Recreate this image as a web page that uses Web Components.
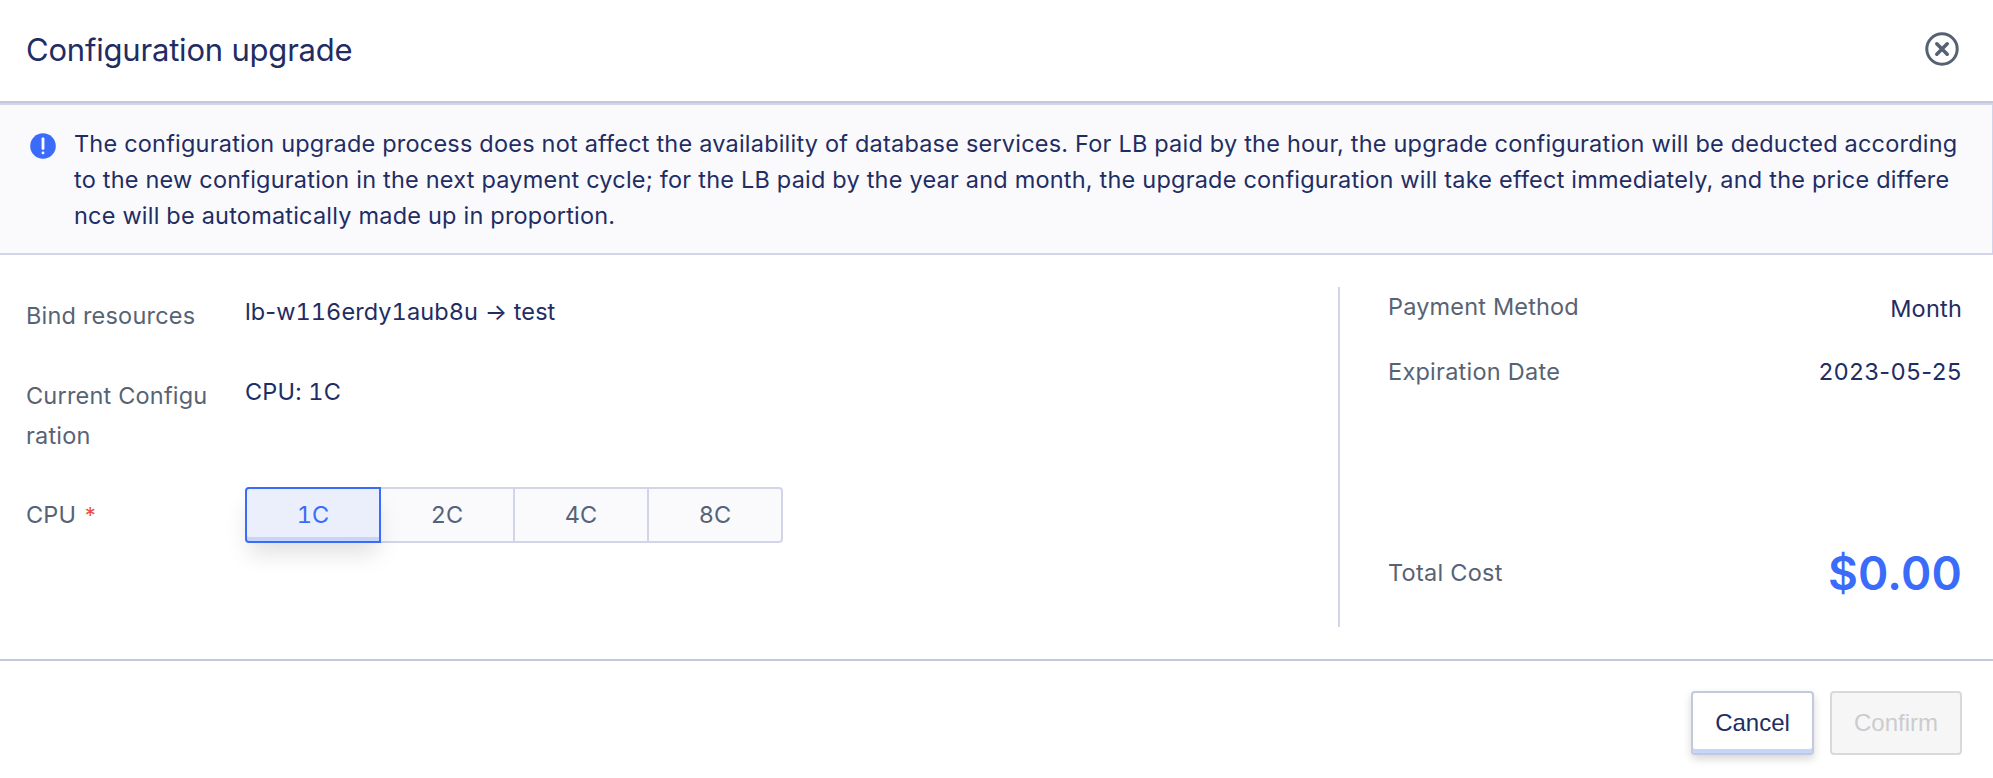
<!DOCTYPE html>
<html lang="en">
<head>
<meta charset="utf-8">
<title>Configuration upgrade</title>
<style>
html, body { margin: 0; height: 100%; overflow: hidden; background: #fff; }
body {
  --ink: #1f2d63; --muted: #576375; --blue: #3b6bf9; --line: #d2d5ea; --edge: #c3c9dc; --tint: #fafafd; --ledge: #c6d5f8;
  font: 400 23.5px/36px Inter, "Liberation Sans", sans-serif; letter-spacing: .204px; color: var(--ink);
}
.num { font-variant-numeric: tabular-nums; }
.resource { letter-spacing: .08px; }
</style>
</head>
<body>
<upgrade-dialog>
  <dialog-header slot="header">Configuration upgrade</dialog-header>
  <notice-bar slot="notice">The configuration upgrade process does not affect the availability of database services. For LB paid by the hour, the upgrade configuration will be deducted according to the new configuration in the next payment cycle; for the LB paid by the year and month, the upgrade configuration will take effect immediately, and the price difference will be automatically made up in proportion.</notice-bar>
  <form-row slot="form" class="resource" label="Bind resources">lb-<span class="num">w116erdy1aub8u</span> → test</form-row>
  <form-row slot="form" label="Current Configuration"><span class="num">CPU: 1C</span></form-row>
  <form-row slot="form" label="CPU" required>
    <segmented-control><segment-item selected>1C</segment-item><segment-item>2C</segment-item><segment-item>4C</segment-item><segment-item>8C</segment-item></segmented-control>
  </form-row>
  <cost-summary slot="summary">
    <summary-row label="Payment Method" class="method">Month</summary-row>
    <summary-row label="Expiration Date" class="date">2023-05-25</summary-row>
    <summary-row label="Total Cost" total>$0.00</summary-row>
  </cost-summary>
  <action-button slot="footer">Cancel</action-button>
  <action-button slot="footer" disabled>Confirm</action-button>
</upgrade-dialog>
<script>
const define = (name, html, setup) => {
  const template = document.createElement('template');
  template.innerHTML = html;
  customElements.define(name, class extends HTMLElement {
    constructor() {
      super();
      this.attachShadow({ mode: 'open' }).append(template.content.cloneNode(true));
    }
    connectedCallback() { if (setup) setup(this, this.shadowRoot); }
  });
};
const setLabel = (host, root) => { root.querySelector('.label').textContent = host.getAttribute('label'); };

define('upgrade-dialog', `
<style>
:host { display: flex; flex-direction: column; height: 100vh; min-height: 778px; box-sizing: border-box; }
.body { display: flex; height: 340px; padding: 32px 31px 32px 26px; border-bottom: 2px solid var(--edge); }
.form { flex: 1; display: flex; flex-direction: column; gap: 40px; padding-top: 8px; }
footer { display: flex; justify-content: flex-end; gap: 16px; padding: 30px 31px 0; }
</style>
<slot name="header"></slot>
<slot name="notice"></slot>
<div class="body"><div class="form"><slot name="form"></slot></div><slot name="summary"></slot></div>
<footer><slot name="footer"></slot></footer>`);

define('dialog-header', `
<style>
:host { display: flex; align-items: center; justify-content: space-between; box-sizing: border-box; height: 103px; padding: 0 34px 2px 26px; border-bottom: 2px solid var(--edge); font-size: 31px; letter-spacing: -.2px; }
svg { display: block; margin-top: -1px; }
</style>
<span><slot></slot></span>
<svg width="34" height="34" viewBox="0 0 34 34" fill="none" stroke="#566273"><circle cx="17" cy="17" r="15.2" stroke-width="3"/><path d="M11.8 11.8 22.2 22.2M22.2 11.8 11.8 22.2" stroke-width="3.6" stroke-linecap="round"/></svg>`);

define('notice-bar', `
<style>
:host { display: flex; box-sizing: border-box; height: 152px; padding: 21px 32px 0 30px; border: solid var(--line); border-width: 2px 1px 2px 0; background: var(--tint); word-break: break-all; }
svg { flex: none; margin: 7px 18px 0 0; }
</style>
<svg width="26" height="26" viewBox="0 0 26 26"><circle cx="13" cy="13" r="12.8" fill="#3b6bf9"/><rect x="11.6" y="4.4" width="2.8" height="12.4" rx="1.1" fill="#fff"/><rect x="11.6" y="18.4" width="2.8" height="2.8" rx="1.3" fill="#fff"/></svg>
<div><slot></slot></div>`);

define('form-row', `
<style>
:host { display: flex; }
.name { width: 184px; margin-right: 35px; padding-top: 1px; margin-bottom: -1px; line-height: 40px; letter-spacing: .2px; color: var(--muted); word-break: break-all; }
.star { color: #e8503f; margin-left: 2px; font-size: 22px; }
.value { line-height: 32px; padding-top: 1px; }
:host([required]) { height: 40px; }
:host([required]) .name { padding-top: 0; }
:host([required]) .value { margin-top: -8px; padding-top: 0; }
</style>
<div class="name"><span class="label"></span></div><div class="value"><slot></slot></div>`, (host, root) => {
  setLabel(host, root);
  if (host.hasAttribute('required') && !root.querySelector('.star')) {
    const star = document.createElement('span');
    star.className = 'star';
    star.textContent = ' *';
    root.querySelector('.name').append(star);
  }
});

define('segmented-control', `<style>:host { display: flex; width: 538px; }</style><slot></slot>`);

define('segment-item', `
<style>
:host { display: block; box-sizing: border-box; width: 136px; height: 56px; margin-right: -2px; border: 2px solid var(--line); background: var(--tint); color: var(--muted); text-align: center; line-height: 52px; font-variant-numeric: tabular-nums; letter-spacing: 0; }
:host([selected]) { z-index: 1; position: relative; border-color: var(--blue); background: #ebeffc; color: var(--blue); box-shadow: inset 0 -4px 0 var(--ledge), 0 14px 24px -4px rgba(0,0,0,.13); }
:host(:first-child) { border-radius: 4px 0 0 4px; }
:host(:last-child) { border-radius: 0 4px 4px 0; }
</style><slot></slot>`);

define('cost-summary', `
<style>
:host { display: flex; flex-direction: column; box-sizing: border-box; width: 624px; height: 340px; padding: 2px 0 0 48px; border-left: 2px solid var(--line); }
</style><slot></slot>`);

define('summary-row', `
<style>
:host { display: flex; justify-content: space-between; height: 65px; }
.label { color: var(--muted); letter-spacing: .25px; }
:host(.method) .label { letter-spacing: .17px; }
:host(.method) .value { padding-top: 2px; }
:host(.date) .value { letter-spacing: .68px; }
:host([total]) { margin-top: auto; height: 72px; align-items: flex-start; }
:host([total]) .value { font-size: 46px; font-weight: 600; letter-spacing: .2px; line-height: 50px; color: var(--blue); margin-top: -7px; }
</style>
<span class="label"></span><span class="value"><slot></slot></span>`, setLabel);

define('action-button', `
<style>
:host { display: block; box-sizing: border-box; width: 123px; height: 64px; border: 2px solid var(--edge); border-radius: 4px; background: #fff; box-shadow: inset 0 -4px 0 var(--ledge), 0 4px 8px rgba(0,0,0,.16); font: 24px/60px "Liberation Sans", Arial, sans-serif; letter-spacing: 0; text-align: center; }
:host([disabled]) { width: 132px; border-color: #d8d9db; background: #f6f6f7; box-shadow: none; color: #cbccce; }
</style><slot></slot>`);
</script>
</body>
</html>
